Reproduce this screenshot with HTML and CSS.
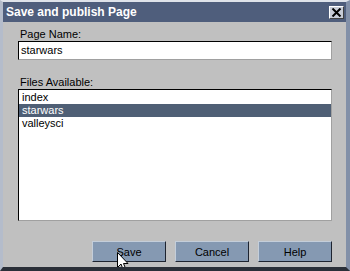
FILE: index.html
```html
<!DOCTYPE html>
<html>
<head>
<meta charset="utf-8">
<link rel="stylesheet" href="styles.css">
</head>
<body>
<div class="window">
  <div class="titlebar">
    <span class="title">Save and publish Page</span>
    <span class="close"><svg width="11" height="9" viewBox="0 0 11 9"><path d="M1.5 0.5 L9.5 8.5 M9.5 0.5 L1.5 8.5" stroke="#000" stroke-width="2" fill="none"/></svg></span>
  </div>
  <div class="content">
    <label class="label">Page Name:</label>
    <div class="input">starwars</div>
    <label class="label files">Files Available:</label>
    <div class="list">
      <div class="item">index</div>
      <div class="item selected">starwars</div>
      <div class="item">valleysci</div>
    </div>
    <div class="buttons">
      <div class="btn">Save</div>
      <div class="btn">Cancel</div>
      <div class="btn">Help</div>
    </div>
  </div>
  <svg class="cursor" width="13" height="20" viewBox="0 0 13 20"><path d="M0.5 0.5 L0.5 15.5 L4 12 L6.5 18.5 L9 17.5 L6.5 11.5 L11 11.5 Z" fill="#fff" stroke="#000" stroke-width="1"/></svg>
</div>
</body>
</html>
```
FILE: styles.css
```css
html, body {
  margin: 0;
  padding: 0;
  background: #c0c0c0;
}
.window {
  position: relative;
  width: 350px;
  height: 271px;
  box-sizing: border-box;
  background: #c0c0c0;
  border-top: 2px solid #dfe3ea;
  border-left: 3px solid #b4bccb;
  border-right: 4px solid #8290a8;
  border-bottom: 4px solid #2a2f38;
  font-family: "Liberation Sans", Arial, sans-serif;
  font-size: 11px;
  color: #000;
  overflow: hidden;
}
.titlebar {
  height: 20px;
  background: #4f5e7c;
  display: flex;
  align-items: center;
  justify-content: space-between;
  padding: 0 2px 0 3px;
}
.title {
  color: #fff;
  font-weight: bold;
  font-size: 12px;
}
.close {
  width: 15px;
  height: 13px;
  box-sizing: border-box;
  background: #c7ccd6;
  border: 1px solid;
  border-color: #fff #404040 #404040 #fff;
  display: flex;
  align-items: center;
  justify-content: center;
}
.content {
  display: flex;
  flex-direction: column;
  padding: 6px 14px 0 15px;
}
.label {
  display: block;
  line-height: 13px;
  padding-left: 2px;
}
.input {
  height: 19px;
  box-sizing: border-box;
  background: #fff;
  border: 1px solid;
  border-color: #000 #a0a0a0 #a0a0a0 #000;
  padding-left: 2px;
  line-height: 17px;
  font-size: 11px;
}
.label.files {
  margin-top: 16px;
}
.list {
  height: 132px;
  box-sizing: border-box;
  background: #fff;
  border: 1px solid;
  border-color: #000 #a0a0a0 #a0a0a0 #000;
  padding-top: 1px;
}
.item {
  height: 13px;
  line-height: 13px;
  padding-left: 3px;
}
.item.selected {
  background: #4f5f75;
  color: #fff;
}
.buttons {
  display: flex;
  justify-content: flex-end;
  gap: 9px;
  margin-top: 20px;
}
.btn {
  width: 74px;
  height: 21px;
  box-sizing: border-box;
  background: #8599b2;
  border: 1px solid;
  border-color: #c4ceda #1e2430 #1e2430 #c4ceda;
  display: flex;
  align-items: center;
  justify-content: center;
  font-size: 11px;
}
.cursor {
  position: absolute;
  left: 114px;
  top: 250px;
}
```
